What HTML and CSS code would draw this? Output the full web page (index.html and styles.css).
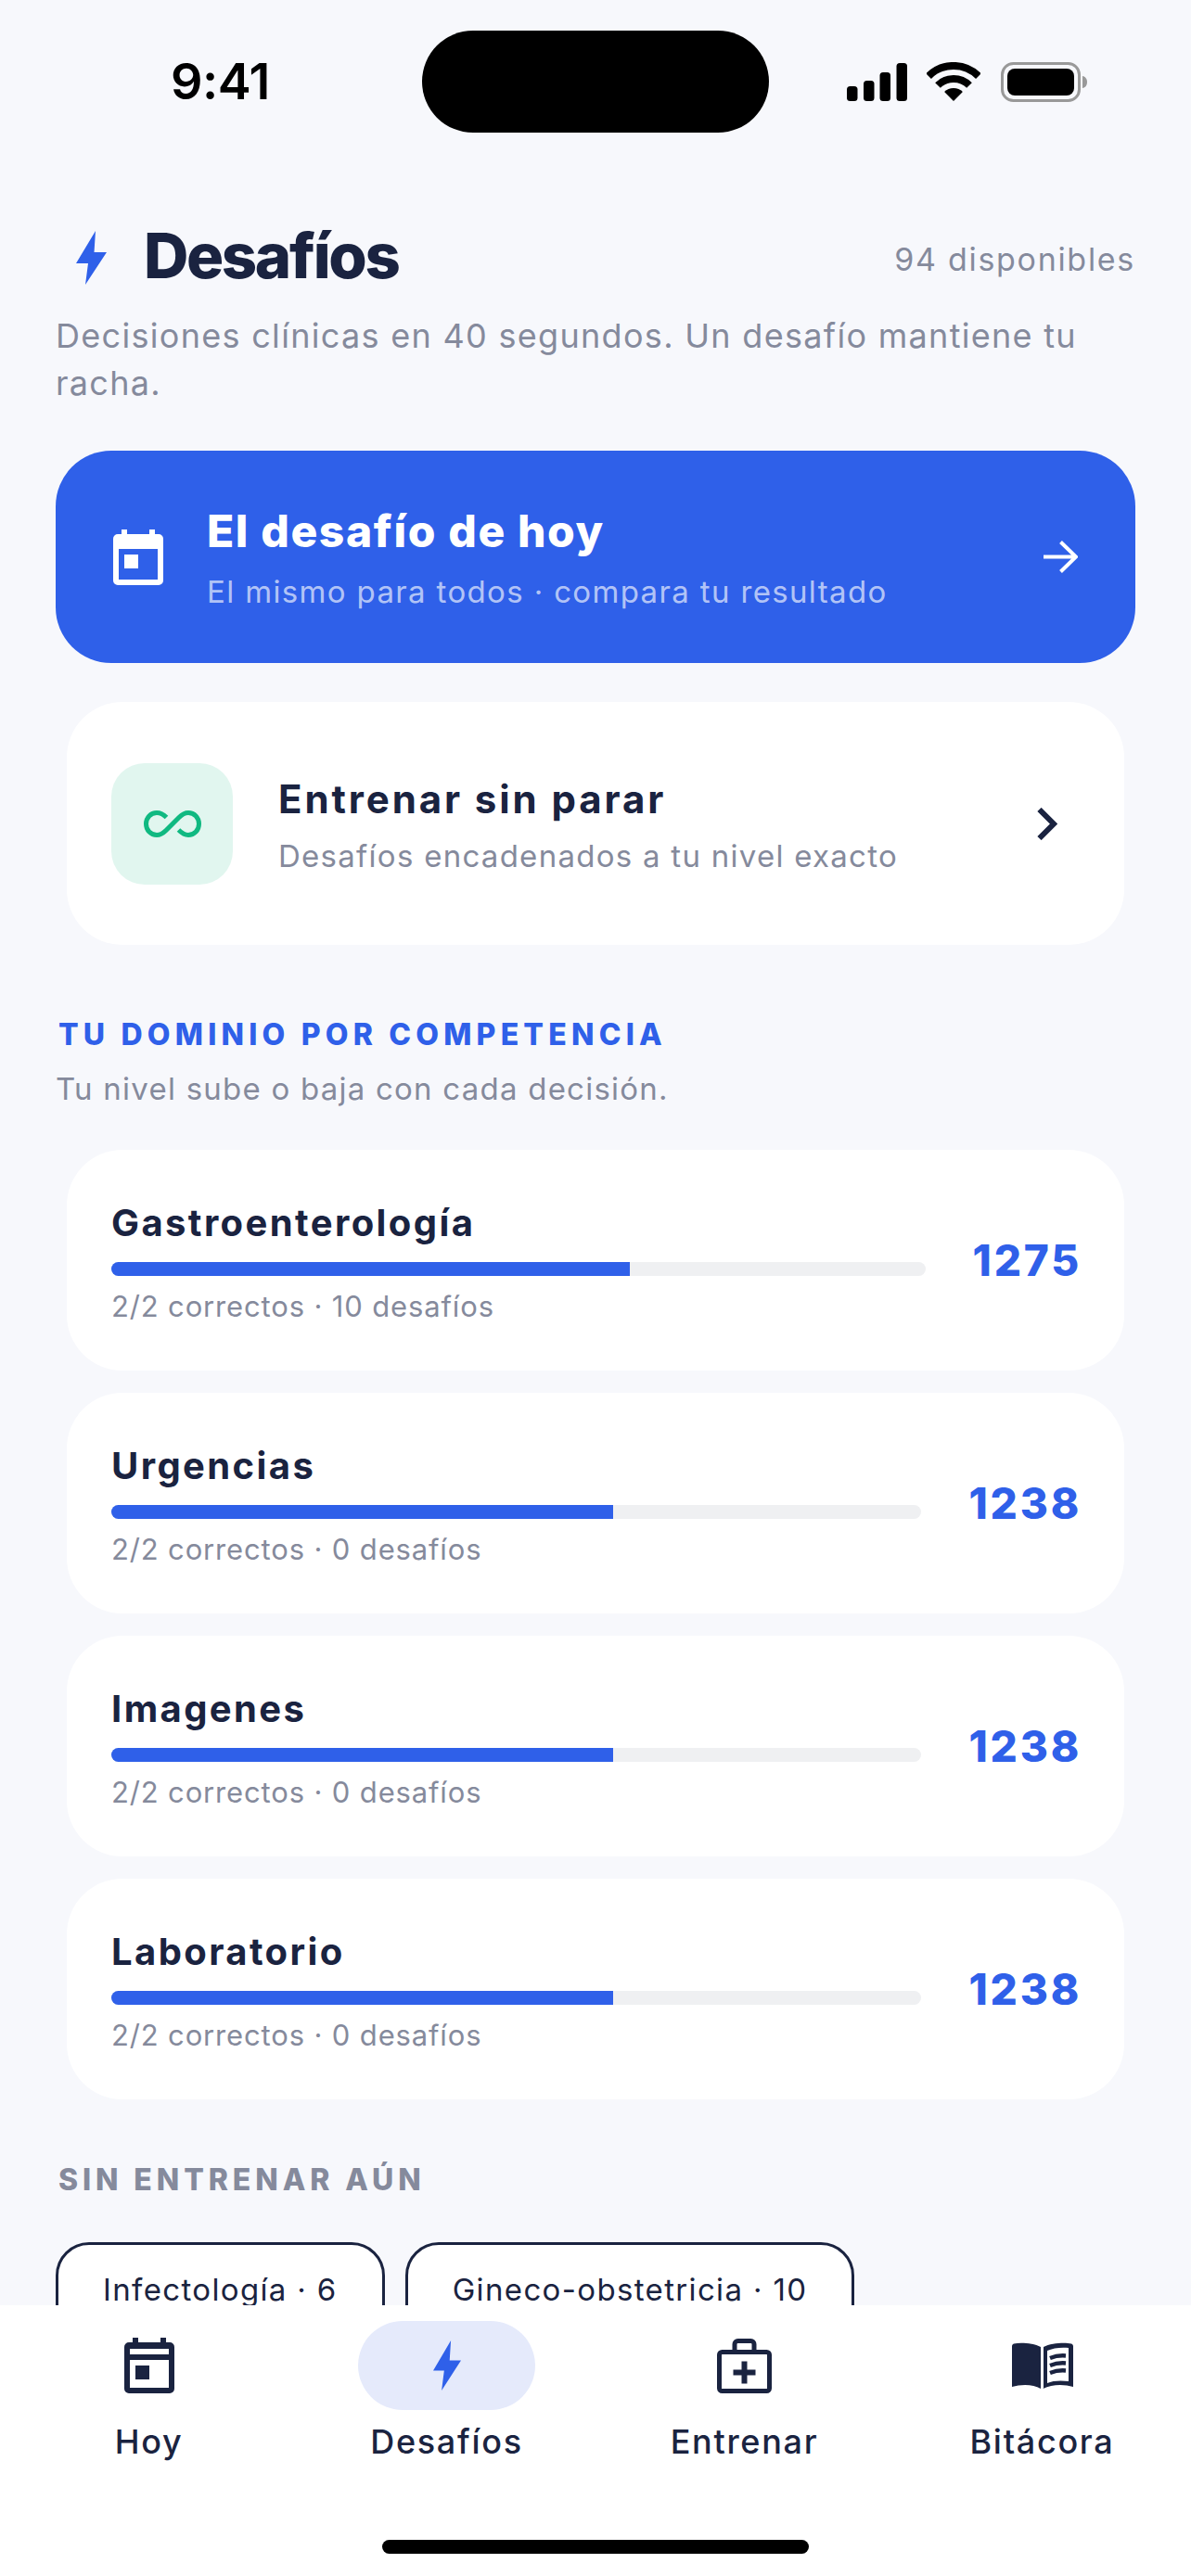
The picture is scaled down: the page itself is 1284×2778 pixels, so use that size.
FILE: index.html
```html
<!DOCTYPE html>
<html lang="es">
<head>
<meta charset="utf-8">
<title>Desafíos</title>
<link rel="stylesheet" href="styles.css">
</head>
<body>
<div class="phone">
  <div class="status">
    <div class="time">9:41</div>
    <div class="island"></div>
    <div class="status-icons">
      <svg class="sig" width="65" height="42" viewBox="0 0 65 42"><rect x="0" y="26" width="11.5" height="16" rx="3.5"/><rect x="18" y="20" width="11.5" height="22" rx="3.5"/><rect x="35.500" y="11" width="11.500" height="31" rx="3.500"/><rect x="53.500" y="1" width="11.500" height="41" rx="3.500"/></svg>
      <svg class="wifi" width="58" height="42" viewBox="0 0 58 42"><path d="M29 42 19.100 32.100A14 14 0 0 1 38.900 32.100Z"/><path d="M12 25A24 24 0 0 1 46 25" fill="none" stroke="#000" stroke-width="8"/><path d="M2.100 15.100A38 38 0 0 1 55.900 15.100" fill="none" stroke="#000" stroke-width="8"/></svg>
      <svg class="batt" width="93" height="43" viewBox="0 0 93 43"><rect x="1.500" y="1.500" width="83" height="40" rx="12" fill="none" stroke="#999" stroke-width="3"/><rect x="7" y="7" width="72" height="29" rx="8"/><path d="M88 15c3 .5 5 3 5 6.500s-2 6-5 6.500z" fill="#999"/></svg>
    </div>
  </div>

  <main class="scroll">
    <header class="head">
      <div class="head-left">
        <svg class="bolt-lg" width="33" height="58" viewBox="0 0 33 58"><path d="M21 0 0 35H13L10 58 33 23H19.500Z" fill="#2f60e9"/></svg>
        <h1 class="title">Desafíos</h1>
      </div>
      <span class="avail">94 disponibles</span>
    </header>
    <p class="lede">Decisiones clínicas en 40 segundos. Un desafío mantiene tu racha.</p>

    <section class="today">
      <svg class="today-ico" width="54" height="60" viewBox="0 0 54 60"><path d="M9 0h6v5h24V0h6v5h4a5 5 0 0 1 5 5v45a5 5 0 0 1-5 5H5a5 5 0 0 1-5-5V10a5 5 0 0 1 5-5h4ZM6 21v33h42V21Z" fill="#fff" fill-rule="evenodd"/><rect x="12" y="27" width="15" height="15" fill="#fff"/></svg>
      <div class="today-txt">
        <div class="today-title">El desafío de hoy</div>
        <div class="today-sub">El mismo para todos · compara tu resultado</div>
      </div>
      <svg class="today-arrow" width="37" height="35" viewBox="0 0 37 35"><path d="M0 17.500H35M18.500 1.500 35 17.500 18.500 33.500" fill="none" stroke="#fff" stroke-width="4"/></svg>
    </section>

    <section class="train">
      <div class="train-ico">
        <svg width="62" height="29" viewBox="0 0 62 29"><path d="M24.500 7.500C21.500 4.500 18 2.500 14 2.500 7.500 2.500 2.500 7.700 2.500 14.500S7.500 26.500 14 26.500C18 26.500 21 24.500 24 21.500L38 7.500C41 4.500 44 2.500 48 2.500 54.500 2.500 59.500 7.700 59.500 14.500S54.500 26.500 48 26.500C44 26.500 41 24.500 37.500 21" fill="none" stroke="#10b981" stroke-width="5"/></svg>
      </div>
      <div class="train-txt">
        <div class="train-title">Entrenar sin parar</div>
        <div class="train-sub">Desafíos encadenados a tu nivel exacto</div>
      </div>
      <svg class="chev" width="22" height="35" viewBox="0 0 22 35"><path d="M2.500 2 18 17.500 2.500 33" fill="none" stroke="#1a2340" stroke-width="6"/></svg>
    </section>

    <h2 class="eyebrow">TU DOMINIO POR COMPETENCIA</h2>
    <p class="eyebrow-sub">Tu nivel sube o baja con cada decisión.</p>

    <div class="rows">
      <article class="row">
        <div class="row-main">
          <div class="row-name">Gastroenterología</div>
          <div class="track"><div class="fill" style="width:63.75%"></div></div>
          <div class="row-meta">2/2 correctos · 10 desafíos</div>
        </div>
        <div class="row-num">1275</div>
      </article>
      <article class="row">
        <div class="row-main">
          <div class="row-name">Urgencias</div>
          <div class="track"><div class="fill" style="width:61.9%"></div></div>
          <div class="row-meta">2/2 correctos · 0 desafíos</div>
        </div>
        <div class="row-num">1238</div>
      </article>
      <article class="row">
        <div class="row-main">
          <div class="row-name">Imagenes</div>
          <div class="track"><div class="fill" style="width:61.9%"></div></div>
          <div class="row-meta">2/2 correctos · 0 desafíos</div>
        </div>
        <div class="row-num">1238</div>
      </article>
      <article class="row">
        <div class="row-main">
          <div class="row-name">Laboratorio</div>
          <div class="track"><div class="fill" style="width:61.9%"></div></div>
          <div class="row-meta">2/2 correctos · 0 desafíos</div>
        </div>
        <div class="row-num">1238</div>
      </article>
    </div>

    <h2 class="eyebrow gray">SIN ENTRENAR AÚN</h2>
    <div class="chips">
      <div class="chip">Infectología · 6</div>
      <div class="chip">Gineco-obstetricia · 10</div>
    </div>
  </main>

  <nav class="tabs">
    <div class="tab">
      <div class="tab-ico">
        <svg width="54" height="60" viewBox="0 0 54 60"><path d="M9 0h6v5h24V0h6v5h4a5 5 0 0 1 5 5v45a5 5 0 0 1-5 5H5a5 5 0 0 1-5-5V10a5 5 0 0 1 5-5h4ZM6 12v6h42v-6ZM6 24v30h42V24Z" fill="#1a2340" fill-rule="evenodd"/><rect x="12" y="30" width="15" height="15" fill="#1a2340"/></svg>
      </div>
      <span class="tab-label">Hoy</span>
    </div>
    <div class="tab">
      <div class="tab-ico active">
        <svg width="30" height="54" viewBox="0 0 33 58" preserveAspectRatio="none"><path d="M21 0 0 35H13L10 58 33 23H19.500Z" fill="#2f60e9"/></svg>
      </div>
      <span class="tab-label">Desafíos</span>
    </div>
    <div class="tab">
      <div class="tab-ico">
        <svg width="59" height="59" viewBox="0 0 59 59"><g fill="none" stroke="#1a2340"><rect x="2.500" y="14.500" width="54" height="42" rx="3" stroke-width="5"/><path d="M19 14V6a3.500 3.500 0 0 1 3.500-3.500h14A3.500 3.500 0 0 1 40 6v8" stroke-width="5"/><path d="M17.500 36.500h24M29.500 24.500v24" stroke-width="6"/></g></svg>
      </div>
      <span class="tab-label">Entrenar</span>
    </div>
    <div class="tab">
      <div class="tab-ico">
        <svg width="66" height="50" viewBox="0 0 66 50"><path d="M31 5C23 1 10 0 2 1.500 .5 2 0 3 0 4.500V48C10 45 23 45 31 50ZM34 5C42 1 56 0 64 1.500 65.500 2 66 3 66 4.500V48C56 45 43 45 33.500 50 33 50 33.500 50 34 49.500Z" fill="#1a2340"/><path d="M38 9C44 6 54 5 61 6V42C54 41 44 41 38 44Z" fill="#fff"/><path d="M41 17C46 15 52 14 58 14.500M41 25C46 23 52 22 58 22.500M41 33C46 31 52 30 58 30.500" fill="none" stroke="#1a2340" stroke-width="4.500"/></svg>
      </div>
      <span class="tab-label">Bitácora</span>
    </div>
    <div class="home"></div>
  </nav>
</div>
</body>
</html>
```

FILE: styles.css
```css
* { box-sizing: border-box; }
html, body { margin: 0; padding: 0; }
body { font-family: Inter, "Noto Sans", sans-serif; background: #f7f8fc; color: #1a2340; }
h1, h2, p { margin: 0; }

.phone { width: 1284px; height: 2778px; display: flex; flex-direction: column; overflow: hidden; background: #f7f8fc; }

.status { flex: none; height: 143px; padding: 33px 112px 0 184px; display: flex; align-items: center; color: #000; }
.time { width: 271px; font-size: 54px; font-weight: 600; line-height: 66px; letter-spacing: -0.5px; }
.island { width: 374px; height: 110px; border-radius: 55px; background: #000; }
.status-icons { margin-left: auto; display: flex; align-items: center; gap: 21px; }
.status-icons svg { display: block; }
.batt { margin-left: 1px; }

.scroll { flex: 1; min-height: 0; overflow: hidden; padding: 100px 60px 0; }

.head { display: flex; align-items: center; justify-content: space-between; height: 72px; }
.head-left { display: flex; align-items: center; gap: 40px; padding-left: 22px; }
.bolt-lg { display: block; margin-bottom: 2px; }
.title { font-size: 67px; font-weight: 800; letter-spacing: -2.4px; line-height: 72px; padding-bottom: 6px; }
.avail { font-size: 34px; color: #858a9c; letter-spacing: 1.7px; }
.lede { margin-top: 22px; font-size: 36px; line-height: 51px; color: #858a9c; letter-spacing: 1.3px; }

.today { margin-top: 47px; height: 229px; border-radius: 60px; background: #2f60e9; display: flex; align-items: center; padding: 0 62px; color: #fff; }
.today-ico { flex: none; display: block; }
.today-txt { flex: 1; margin-left: 47px; padding-top: 2px; }
.today-title { font-size: 48px; font-weight: 800; line-height: 58px; letter-spacing: 1.6px; }
.today-sub { margin-top: 15px; font-size: 33px; line-height: 42px; letter-spacing: 1.35px; color: rgba(255,255,255,.65); }
.today-arrow { flex: none; display: block; }

.train { margin: 42px 12px 0; height: 262px; border-radius: 60px; background: #fff; display: flex; align-items: center; padding: 0 72px 0 48px; }
.train-ico { flex: none; width: 131px; height: 131px; border-radius: 36px; background: #e1f6ef; display: flex; align-items: center; justify-content: center; }
.train-ico svg { display: block; }
.train-txt { flex: 1; margin-left: 49px; padding-top: 4px; }
.train-title { font-size: 42px; font-weight: 650; line-height: 52px; letter-spacing: 2.9px; }
.train-sub { margin-top: 14px; font-size: 33px; line-height: 42px; letter-spacing: 1.27px; color: #858a9c; }
.chev { flex: none; display: block; }

.eyebrow { margin-top: 74px; padding-left: 3px; font-size: 32px; font-weight: 800; line-height: 46px; letter-spacing: 5.2px; color: #2f60e9; }
.eyebrow.gray { margin-top: 64px; color: #858a9c; letter-spacing: 4.9px; }
.eyebrow-sub { margin-top: 12px; font-size: 33px; line-height: 46px; letter-spacing: 1.23px; color: #858a9c; }

.rows { margin: 43px 12px 0; display: flex; flex-direction: column; gap: 24px; }
.row { height: 238px; border-radius: 60px; background: #fff; display: flex; align-items: center; gap: 51px; padding: 0 48px; }
.row-main { flex: 1; min-width: 0; padding-top: 5px; }
.row-name { font-size: 40px; font-weight: 650; line-height: 50px; letter-spacing: 2.4px; }
.track { margin-top: 17px; height: 15px; border-radius: 8px; background: #eff0f2; overflow: hidden; }
.fill { height: 100%; background: #2f60e9; }
.row-meta { margin-top: 12px; font-size: 31px; line-height: 42px; letter-spacing: 0.85px; color: #858a9c; }
.row-num { flex: none; margin-right: -2px; font-size: 46px; font-weight: 800; letter-spacing: 2.8px; color: #2f60e9; }

.chips { margin-top: 44px; display: flex; gap: 22px; }
.chip { padding: 27px 48px 30px; border: 3px solid #1a2340; border-radius: 36px; background: #fff; font-size: 33px; line-height: 42px; letter-spacing: 1.35px; }

.tabs { position: relative; flex: none; height: 292px; background: #fff; display: flex; align-items: flex-start; padding-top: 17px; }
.tab { flex: 1; display: flex; flex-direction: column; align-items: center; }
.tab-ico { width: 191px; height: 96px; border-radius: 48px; display: flex; align-items: center; justify-content: center; }
.tab-ico svg { display: block; }
.tab-ico.active { background: #e5eafb; }
.tab-label { margin-top: 12px; font-size: 36px; font-weight: 450; line-height: 44px; letter-spacing: 1.7px; }
.home { position: absolute; left: 412px; bottom: 24px; width: 460px; height: 15px; border-radius: 8px; background: #000; }
```
